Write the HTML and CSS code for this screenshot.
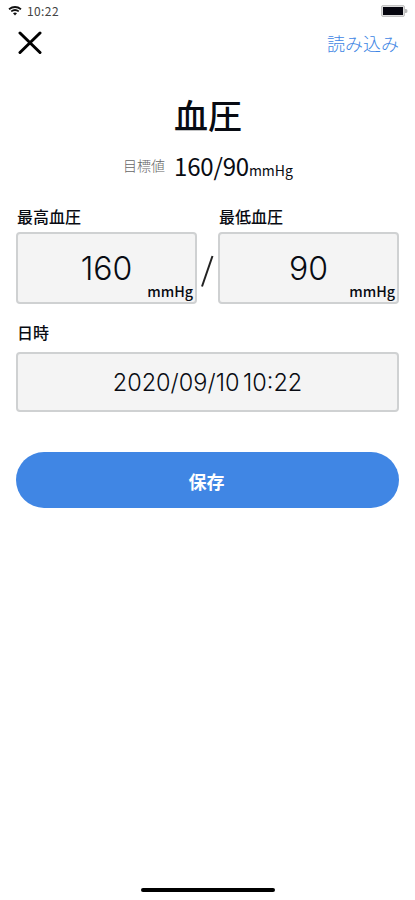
FILE: index.html
```html
<!DOCTYPE html>
<html lang="ja">
<head>
    <meta charset="UTF-8">
    <title>血圧</title>
    <link rel="stylesheet" href="styles.css">
</head>

<body>

<div class="app-container">
    <div class="status-bar">
        <svg class="wifi" width="14" height="10" viewBox="0 0 14 10">
            <path d="M1 3.2Q7 -1.2 13 3.2M3.2 5.4Q7 2.6 10.8 5.4"/>
            <path class="dot" d="M5 7.2Q7 5.8 9 7.2L7 9.4Z"/>
        </svg>
        <span class="clock">10:22</span>
        <svg class="battery" width="27" height="12" viewBox="0 0 27 12">
            <rect class="shell" x="0.5" y="0.5" width="23" height="11" rx="1.5"/>
            <rect class="level" x="2" y="2" width="20" height="8"/>
            <path class="tip" d="M24 4h1q1.500 0 1.500 2t-1.500 2h-1z"/>
        </svg>
    </div>

    <div class="header">
        <button class="close">
            <svg width="24" height="24" viewBox="0 0 24 24">
                <path d="M2 2L22 21.500M22 2L2 21.500"/>
            </svg>
        </button>
        <button class="load">読み込み</button>
    </div>

    <h1>血圧</h1>
    <div class="target">
        <span class="target-label">目標値</span>
        <span class="target-value">160/90</span>
        <span class="target-unit">mmHg</span>
    </div>

    <div class="pressure">
        <div class="field">
            <label>最高血圧</label>
            <div class="input">
                <span class="value">160</span>
                <span class="unit">mmHg</span>
            </div>
        </div>
        <svg class="slash" width="21" height="72" viewBox="0 0 21 72">
            <path d="M5 54.500L15.500 24"/>
        </svg>
        <div class="field">
            <label>最低血圧</label>
            <div class="input">
                <span class="value">90</span>
                <span class="unit">mmHg</span>
            </div>
        </div>
    </div>

    <div class="field date">
        <label>日時</label>
        <div class="input">2020/09/10 10:22</div>
    </div>

    <button class="save">保存</button>

    <div class="home-indicator"></div>
</div>

</body>
</html>
```

FILE: styles.css
```css
:root {
    --text-color: #080b12;
    --accent-color: #4086e4;
    --input-color: #f4f4f4;
    --input-border-color: #cfd1d2;
}

* {
    box-sizing: border-box;
}

body {
    margin: 0;
    background-color: #ffffff;
    color: var(--text-color);
    font-family: "Noto Sans CJK JP", sans-serif;
}

button {
    border: none;
    padding: 0;
    background: none;
    font-family: inherit;
}

svg {
    display: block;
    fill: none;
}

.app-container {
    display: flex;
    flex-direction: column;
    height: 900px;
    padding: 0 16px 8px;
}

.status-bar {
    display: flex;
    align-items: center;
    height: 22px;
    margin: 0 -9px 0 -8px;
}
.wifi {
    stroke: #111111;
    stroke-width: 1.8;
}
.wifi .dot {
    fill: #111111;
    stroke: none;
}
.clock {
    margin-left: 5px;
    color: #444444;
    font-size: 12px;
    letter-spacing: 0.4px;
    line-height: 22px;
}
.battery {
    margin-left: auto;
}
.battery .shell {
    fill: #dddddd;
    stroke: #c4c4c4;
}
.battery .level {
    fill: #05050f;
}
.battery .tip {
    fill: #b8b8b8;
}

.header {
    display: flex;
    align-items: center;
    justify-content: space-between;
    height: 42px;
}
.close {
    margin-left: 2px;
}
.close path {
    stroke: #000000;
    stroke-width: 3;
    stroke-linecap: round;
}
.load {
    color: var(--accent-color);
    font-size: 18px;
    font-weight: 300;
}

h1 {
    margin: 26px 0 0;
    padding-left: 1px;
    font-size: 34px;
    font-weight: 500;
    line-height: 50px;
    text-align: center;
}

.target {
    display: flex;
    align-items: baseline;
    justify-content: center;
    height: 36px;
    margin-top: 8px;
    padding-left: 1px;
    line-height: 36px;
}
.target-label {
    align-self: flex-start;
    margin-right: 9px;
    color: #666666;
    font-size: 14px;
    font-weight: 300;
    line-height: 34px;
}
.target-value {
    font-size: 24px;
    letter-spacing: -0.2px;
}
.target-unit {
    font-size: 14px;
}

.pressure {
    display: flex;
    align-items: flex-end;
    margin-top: 20px;
}
.field {
    flex: 1;
}
label {
    display: block;
    height: 28px;
    padding-left: 1px;
    font-size: 16px;
    font-weight: 500;
    line-height: 25px;
}
.input {
    display: grid;
    place-items: center;
    height: 72px;
    border: 2px solid var(--input-border-color);
    border-radius: 4px;
    background-color: var(--input-color);
    font-family: Inter, sans-serif;
}
.value {
    grid-area: 1 / 1;
    font-size: 32px;
    font-weight: 300;
}
.unit {
    grid-area: 1 / 1;
    place-self: end;
    padding: 0 2px 0 0;
    font-family: "Noto Sans CJK JP", sans-serif;
    font-size: 14.3px;
    font-weight: 500;
    line-height: 22px;
}
.slash path {
    stroke: #222222;
    stroke-width: 2;
}

.date {
    flex: none;
    margin-top: 16px;
}
.date label {
    height: 32px;
}
.date .input {
    height: 60px;
    font-size: 23.5px;
    font-weight: 300;
    word-spacing: -3px;
}

.save {
    height: 56px;
    margin-top: 40px;
    padding: 2px 2px 0 0;
    border-radius: 28px;
    background-color: var(--accent-color);
    color: #ffffff;
    font-size: 18px;
    font-weight: 700;
}

.home-indicator {
    width: 134px;
    height: 4px;
    margin: auto auto 0;
    border-radius: 2px;
    background-color: #000000;
}
```
